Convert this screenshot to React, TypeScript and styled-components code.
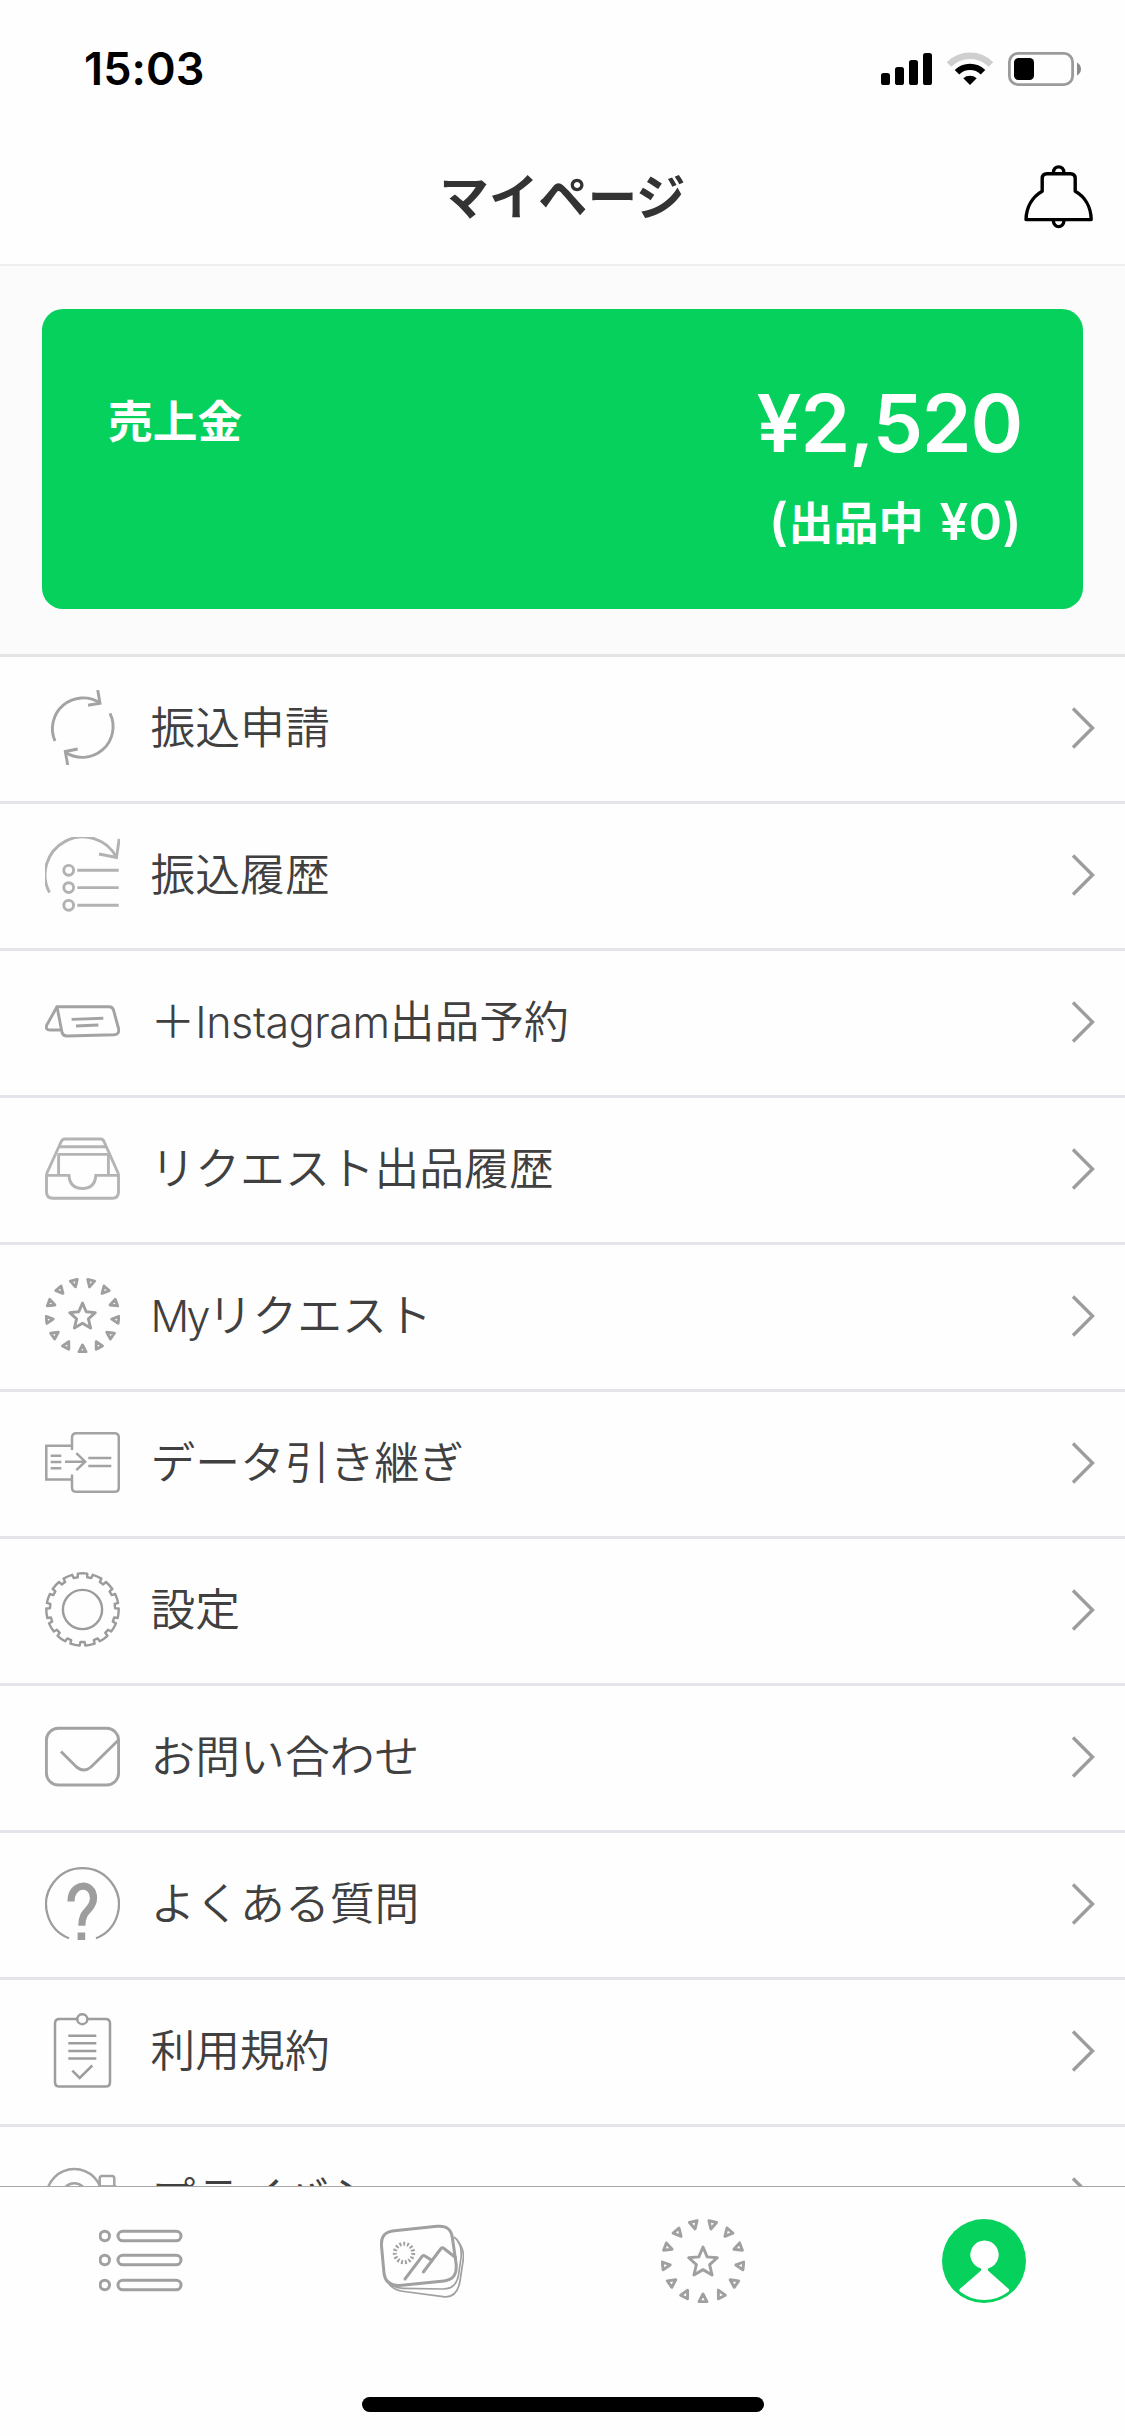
import React from 'react';
import styled, { createGlobalStyle } from 'styled-components';

const GREEN = '#05d15c';
const GREY = '#a3a3a3';

const GlobalStyle = createGlobalStyle`
  * { box-sizing: border-box; }
  body { margin: 0; background: #fff; }
`;

const Screen = styled.div`
  width: 1125px;
  height: 2436px;
  display: flex;
  flex-direction: column;
  overflow: hidden;
  background: #fefefe;
  font-family: Inter, 'Noto Sans CJK JP', sans-serif;
`;

const StatusBar = styled.div`
  flex: none;
  height: 132px;
  display: flex;
  align-items: flex-start;
  justify-content: space-between;
  padding: 42px 44px 0 84px;
`;

const Clock = styled.div`
  font-size: 45px;
  font-weight: 600;
  line-height: 54px;
  letter-spacing: 0.1px;
  color: #000;
`;

const StatusIcons = styled.svg`
  width: 200px;
  height: 34px;
  margin-top: 10px;
`;

const NavBar = styled.header`
  flex: none;
  height: 134px;
  display: grid;
  grid-template-columns: 120px 1fr 120px;
  align-items: center;
  border-bottom: 2px solid #efefef;
`;

const Title = styled.h1`
  grid-column: 2;
  margin: 0;
  padding-bottom: 8px;
  text-align: center;
  font-size: 49.4px;
  line-height: 60px;
  font-weight: 700;
  font-family: 'Noto Sans CJK JP', sans-serif;
  color: #333;
`;

const BellButton = styled.button`
  justify-self: end;
  margin: 0 31px 2px 0;
  padding: 0;
  border: 0;
  background: none;
  width: 70px;
  height: 64px;
  svg { display: block; }
`;

const Summary = styled.section`
  flex: none;
  height: 391px;
  padding: 43px 42px 0;
  background: #fbfbfb;
  border-bottom: 3px solid #e4e4e6;
`;

const SalesCard = styled.div`
  height: 300px;
  border-radius: 21px;
  background: ${GREEN};
  color: #fff;
  display: flex;
  justify-content: space-between;
  padding: 72px 61px 0 66px;
`;

const SalesLabel = styled.div`
  font: 700 44.7px/76px 'Noto Sans CJK JP', sans-serif;
`;

const SalesFigures = styled.div`
  display: flex;
  flex-direction: column;
  align-items: flex-end;
`;

const Amount = styled.div`
  font-size: 80px;
  line-height: 84px;
  font-weight: 600;
  letter-spacing: -1.2px;
`;

const Listed = styled.div`
  display: flex;
  align-items: baseline;
  margin-top: 20px;
  line-height: 72px;
  font-size: 51px;
  font-weight: 600;
  letter-spacing: 0.4px;
`;

const ListedLabel = styled.span`
  font: 700 45px/72px 'Noto Sans CJK JP', sans-serif;
  letter-spacing: 0;
  margin-right: 16px;
`;

const Menu = styled.ul`
  flex: 1;
  min-height: 0;
  margin: 0;
  padding: 0;
  overflow: hidden;
  list-style: none;
`;

const MenuRow = styled.li`
  height: 147px;
  display: flex;
  align-items: flex-start;
  padding: 33px 30px 0 45px;
  border-bottom: 3px solid #e4e4ea;
`;

const MenuIcon = styled.svg.attrs({ viewBox: '0 0 75 75' })<{ $tone?: string }>`
  flex: none;
  width: 75px;
  height: 75px;
  fill: none;
  stroke: ${(p) => p.$tone ?? GREY};
  stroke-width: 2.9;
`;

const MenuLabel = styled.span`
  flex: 1;
  margin-left: 30.5px;
  font-family: 'Noto Sans CJK JP', sans-serif;
  font-size: 44.8px;
  font-weight: 350;
  line-height: 70px;
  color: #404040;
  white-space: nowrap;
`;

const Latin = styled.span<{ $track?: number }>`
  font-family: Inter, sans-serif;
  font-weight: 350;
  font-size: 43px;
  letter-spacing: ${(p) => p.$track ?? 0}px;
`;

const Chevron = styled.svg`
  flex: none;
  width: 24px;
  height: 44px;
  margin-top: 16px;
  fill: none;
  stroke: #9d9d9d;
  stroke-width: 3.4;
`;

const TabBar = styled.nav`
  flex: none;
  height: 250px;
  display: flex;
  flex-direction: column;
  align-items: center;
  border-top: 1px solid #a8a8a8;
`;

const Tabs = styled.div`
  width: 100%;
  height: 210px;
  display: grid;
  grid-template-columns: repeat(4, 1fr);
  justify-items: center;
  padding-top: 32px;
`;

const TabIcon = styled.svg<{ $stroke?: number }>`
  width: 84px;
  height: 84px;
  fill: none;
  stroke: #a0a0a0;
  stroke-width: ${(p) => p.$stroke ?? 3};
`;

const HomeIndicator = styled.div`
  width: 402px;
  height: 15px;
  border-radius: 8px;
  background: #000;
`;

const Burst = () => (
  <>
    {Array.from({ length: 13 }, (_, i) => (
      <path
        key={i}
        d="M37.5 67 L41 73.8 H34 Z"
        strokeLinejoin="round"
        transform={`rotate(${(i * 360) / 13} 37.5 37.5)`}
      />
    ))}
    <path
      strokeLinejoin="round"
      d="M37.5 25 L41.2 33.8 L50.3 34.6 L43.4 40.8 L45.6 50 L37.5 45.2 L29.4 50 L31.6 40.8 L24.7 34.6 L33.8 33.8 Z"
    />
  </>
);

const gearPath = () => {
  const teeth = 15;
  const pts: string[] = [];
  const at = (r: number, deg: number) => {
    const a = ((deg - 90) * Math.PI) / 180;
    return `${(37.5 + r * Math.cos(a)).toFixed(2)} ${(37.5 + r * Math.sin(a)).toFixed(2)}`;
  };
  for (let i = 0; i < teeth; i++) {
    const c = (i * 360) / teeth;
    pts.push(`${i === 0 ? 'M' : 'L'}${at(36.2, c - 7.5)}`);
    pts.push(`A36.2 36.2 0 0 1 ${at(36.2, c + 7.5)}`);
    pts.push(`L${at(32.6, c + 8.3)}`);
    pts.push(`L${at(32.6, c + 15.7)}`);
  }
  return `${pts.join(' ')}Z`;
};

const items: { id: string; label: React.ReactNode; icon: React.ReactNode; tone?: string }[] = [
  {
    id: 'transfer',
    label: '振込申請',
    icon: (
      <>
        <path d="M10 51 A30.7 30.7 0 0 1 55 13" />
        <path d="M52.7 0 L55 13.2 L43 15.3" />
        <path d="M65 23.3 A30.7 30.7 0 0 1 20 62" />
        <path d="M32.7 59 L20.3 61.5 L22.7 75" />
      </>
    ),
  },
  {
    id: 'transfer-history',
    label: '振込履歴',
    tone: '#b2b2b2',
    icon: (
      <>
        <path d="M4.5 55.5 A37.6 37.6 0 0 1 71.3 20" />
        <path d="M74.2 2 L71.5 20.5 L54 17" />
        {[33.3, 50.6, 68.3].map((y) => (
          <React.Fragment key={y}>
            <circle cx="23.7" cy={y} r="4.9" />
            <path d={`M32.3 ${y} H73.7`} />
          </React.Fragment>
        ))}
      </>
    ),
  },
  {
    id: 'instagram',
    label: (
      <>
        ＋<Latin $track={-0.4}>Instagram</Latin>出品予約
      </>
    ),
    icon: (
      <g strokeLinejoin="round">
        <path d="M12 22.7 H64 Q67.5 22.7 68.5 26 L73.4 44 Q75 50.5 69 50.8 L22 52 Q18 52 17 48.5 Z" />
        <path d="M12 22.7 L1.8 41 Q0 46 5 46 H15.5" />
        <path d="M26.6 35.4 L58.3 34.2 M31 42 L53.4 41" />
      </g>
    ),
  },
  {
    id: 'request-history',
    label: 'リクエスト出品履歴',
    tone: '#b4b4b4',
    icon: (
      <>
        <path d="M1.5 43 L16 11 Q17.2 8 20 8 H55.5 Q58 8 59 10.5 L73.5 43" />
        <path d="M14.5 15.7 H61 M12.5 23.4 H63.5 M13.6 23.4 V44 M63.4 23.4 V44" />
        <path d="M1.5 44.4 H24 C24.5 53 29.5 57.5 37.5 57.5 C45.5 57.5 50.3 53 50.8 44.4 H73.5 V61 Q73.5 67.2 67.3 67.2 H7.7 Q1.5 67.2 1.5 61 Z" />
      </>
    ),
  },
  {
    id: 'my-request',
    label: (
      <>
        <Latin $track={-2.8}>My</Latin>リクエスト
      </>
    ),
    tone: '#9f9f9f',
    icon: <Burst />,
  },
  {
    id: 'data',
    label: 'データ引き継ぎ',
    icon: (
      <g strokeWidth="2.5">
        <path d="M27 25 V12.6 Q27 8.2 31.4 8.2 H69.5 Q73.8 8.2 73.8 12.6 V62.4 Q73.8 66.8 69.5 66.8 H31.4 Q27 66.8 27 62.4 V49.5" />
        <path d="M27 20.8 H1.3 V54.4 H27" />
        <path d="M5.7 30.7 H16.3 M5.7 37 H16.3 M5.7 43.3 H16.3" />
        <path d="M20 36.7 H40 M31.3 28.2 L40.2 36.7 L31.3 45.2" />
        <path d="M43.3 33 H66.3 M43.3 41 H66.3" />
      </g>
    ),
  },
  {
    id: 'settings',
    label: '設定',
    tone: '#9b9b9b',
    icon: (
      <g strokeWidth="2.4">
        <path d={gearPath()} strokeLinejoin="round" />
        <circle cx="37.5" cy="37.5" r="19.6" />
      </g>
    ),
  },
  {
    id: 'contact',
    label: 'お問い合わせ',
    icon: (
      <>
        <rect x="1.4" y="9.2" width="72.2" height="56.8" rx="12" />
        <path d="M16 32.5 L31.5 48 Q39 54 46 48 L74 20.5" />
      </>
    ),
  },
  {
    id: 'faq',
    label: 'よくある質問',
    tone: '#9d9d9d',
    icon: (
      <>
        <path d="M24 72.3 A36.4 36.4 0 1 1 51 72.3" strokeWidth="2.3" />
        <path
          d="M26 35.5 C26 16 48.5 15.5 48.5 32 C48.5 45 36.8 42.5 36.8 59.7"
          strokeWidth="7.2"
        />
        <path d="M36.4 66.5 V74" strokeWidth="7.6" />
      </>
    ),
  },
  {
    id: 'terms',
    label: '利用規約',
    tone: '#9d9d9d',
    icon: (
      <g strokeWidth="2.5">
        <path d="M32 6 H14.5 Q10 6 10 10.5 V69 Q10 73.6 14.5 73.6 H60.5 Q65 73.6 65 69 V10.5 Q65 6 60.5 6 H42.6" />
        <circle cx="37.3" cy="6.2" r="5" />
        <path d="M23.3 22.7 H51.3 M23.3 30.3 H51.3 M23.3 37.9 H51.3 M23.3 45.5 H51.3" />
        <path d="M27.3 57.6 L34.7 65 L47.3 52.5" />
      </g>
    ),
  },
  {
    id: 'privacy',
    label: 'プライバシー',
    icon: (
      <g strokeWidth="2.5">
        <circle cx="29.3" cy="36.8" r="27.8" />
        <circle cx="29.3" cy="35.5" r="12.3" />
        <rect x="54.7" y="16" width="14.6" height="14" rx="2.5" />
        <path d="M53 26.4 H71.5" />
      </g>
    ),
  },
];

const App = () => (
  <>
    <GlobalStyle />
    <Screen>
      <StatusBar>
        <Clock>15:03</Clock>
        <StatusIcons viewBox="881 52 200 34">
          <rect x="881" y="73" width="9" height="12" rx="2.6" />
          <rect x="895" y="67" width="9" height="18" rx="2.6" />
          <rect x="909" y="60" width="9" height="25" rx="2.6" />
          <rect x="923" y="53" width="9" height="32" rx="2.6" />
          <g fill="none">
            <path d="M949 64.5 A29.5 29.5 0 0 1 991 64.5" stroke="#cfcfcf" strokeWidth="6.4" />
            <path d="M957 72.3 A18.4 18.4 0 0 1 983 72.3" stroke="#000" strokeWidth="6.4" />
          </g>
          <path d="M963.3 78.2 A10.4 10.4 0 0 1 976.7 78.2 L970 85 Z" />
          <rect x="1009.4" y="53.4" width="63.2" height="31.2" rx="8.5" fill="none" stroke="#9b9b9b" strokeWidth="2.8" />
          <rect x="1014" y="58" width="20" height="22" rx="4.4" />
          <path d="M1077 62.5 C1082.3 65 1082.3 73 1077 75.5 Z" fill="#8a8a8a" />
        </StatusIcons>
      </StatusBar>

      <NavBar>
        <Title>マイページ</Title>
        <BellButton aria-label="お知らせ">
          <svg width="70" height="64" viewBox="1024 165 70 64" fill="none" stroke="#000" strokeWidth="3.4" strokeLinejoin="round">
            <path d="M1042.2 191.3 V178.5 Q1042.2 173.7 1047 173.7 H1070.4 Q1075.2 173.7 1075.2 178.5 V191.3 C1084.5 196.5 1091 206.5 1091.2 219.6 H1026 C1026.4 206.5 1033 196.5 1042.2 191.3 Z" />
            <path d="M1053.5 173 C1052.5 164.8 1064.8 164.8 1063.8 173" />
            <path d="M1053.3 220.5 C1053.8 228.6 1063.5 228.6 1064 220.5" />
          </svg>
        </BellButton>
      </NavBar>

      <Summary>
        <SalesCard>
          <SalesLabel>売上金</SalesLabel>
          <SalesFigures>
            <Amount>¥2,520</Amount>
            <Listed>
              (<ListedLabel>出品中</ListedLabel>¥0)
            </Listed>
          </SalesFigures>
        </SalesCard>
      </Summary>

      <Menu>
        {items.map((item) => (
          <MenuRow key={item.id}>
            <MenuIcon $tone={item.tone}>{item.icon}</MenuIcon>
            <MenuLabel>{item.label}</MenuLabel>
            <Chevron viewBox="0 0 24 44">
              <path d="M2 2.5 L21.5 22 L2 41.5" />
            </Chevron>
          </MenuRow>
        ))}
      </Menu>

      <TabBar>
        <Tabs>
          <TabIcon viewBox="0 0 84 84">
            {[17, 41, 66].map((y) => (
              <React.Fragment key={y}>
                <circle cx="5.8" cy={y} r="4.7" />
                <rect x="19" y={y - 4.8} width="63" height="9.6" rx="4.8" />
              </React.Fragment>
            ))}
          </TabIcon>
          <TabIcon viewBox="0 0 84 84">
            <g strokeWidth="1.7">
              <path d="M74 18 C80 22 82 29 81 39 L78.5 56 C77 66 71 70 63 70 L23 69.3 C14 69 8 65 6 57" />
              <path d="M78 23 C83 28 84 34 83.2 41 L80 62 C78 74 72 79 63 77.6 L24 72.5 C16 71.5 11 69 8 63" />
            </g>
            <path
              fill="#fefefe"
              d="M1.5 27 C0.7 17 5 12.6 14.4 11.7 L57 7.3 C67 6.4 71.3 10.5 72.4 19 L76 44 C77.3 55 74 60.8 64 62 L22 66.3 C11 67.3 5 63.5 4 54 Z"
            />
            <circle cx="24" cy="34" r="9.2" strokeWidth="4" strokeDasharray="1.9 1.95" />
            <path
              strokeLinejoin="round"
              strokeLinecap="round"
              d="M25 60 L42.3 37.2 Q43.4 36 45 37 L50.4 40.6 M43.4 53 L61 29.5 Q62.3 28 64 29.5 L75.5 38.5"
            />
          </TabIcon>
          <TabIcon viewBox="0 0 75 75" $stroke={2.6}>
            <Burst />
          </TabIcon>
          <TabIcon viewBox="0 0 84 84">
            <circle cx="42" cy="42" r="42" fill={GREEN} stroke="none" />
            <path
              fill="#fff"
              stroke="none"
              d="M38.5 49.3 A14.2 14.2 0 1 1 46.5 49.3 Q45 51 47 52.5 L66.5 69.8 Q68 71.3 66.3 72.8 A39.3 39.3 0 0 1 18.2 72.8 Q16.5 71.3 18 69.8 L38 52.5 Q40 51 38.5 49.3 Z"
            />
          </TabIcon>
        </Tabs>
        <HomeIndicator />
      </TabBar>
    </Screen>
  </>
);

export default App;
